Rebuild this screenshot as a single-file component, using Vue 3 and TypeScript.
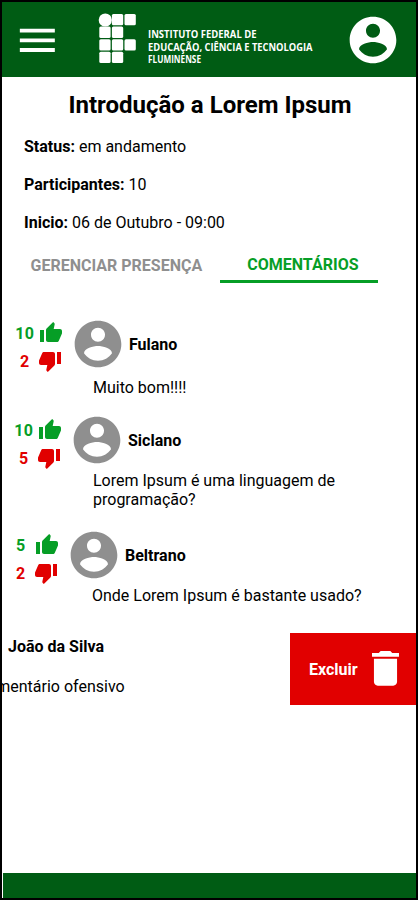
<script setup lang="ts">
interface Comment {
  id: string
  author: string
  text: string
  likes: number
  dislikes: number
}

const comments: Comment[] = [
  { id: 'fulano', author: 'Fulano', text: 'Muito bom!!!!', likes: 10, dislikes: 2 },
  { id: 'siclano', author: 'Siclano', text: 'Lorem Ipsum é uma linguagem de programação?', likes: 10, dislikes: 5 },
  { id: 'beltrano', author: 'Beltrano', text: 'Onde Lorem Ipsum é bastante usado?', likes: 5, dislikes: 2 },
]

const menuPath = 'M3 18h18v-2H3v2zm0-5h18v-2H3v2zm0-7v2h18V6H3z'
const deletePath = 'M6 19c0 1.1.9 2 2 2h8c1.1 0 2-.9 2-2V7H6v12zM19 4h-3.5l-1-1h-5l-1 1H5v2h14V4z'
const accountPath =
  'M12 2C6.48 2 2 6.48 2 12s4.48 10 10 10 10-4.48 10-10S17.52 2 12 2zm0 3c1.66 0 3 1.34 3 3s-1.34 3-3 3-3-1.34-3-3 1.34-3 3-3zm0 14.2c-2.5 0-4.71-1.28-6-3.22.03-1.99 4-3.08 6-3.08 1.99 0 5.97 1.09 6 3.08-1.29 1.94-3.5 3.22-6 3.22z'
const thumbUpPath =
  'M1 21h4V9H1v12zm22-11c0-1.1-.9-2-2-2h-6.31l.95-4.57.03-.32c0-.41-.17-.79-.44-1.06L14.17 1 7.59 7.59C7.22 7.95 7 8.45 7 9v10c0 1.1.9 2 2 2h9c.83 0 1.54-.5 1.84-1.22l3.02-7.05c.09-.23.14-.47.14-.73v-2z'
const thumbDownPath =
  'M15 3H6c-.83 0-1.54.5-1.84 1.22l-3.02 7.05c-.09.23-.14.47-.14.73v2c0 1.1.9 2 2 2h6.31l-.95 4.57-.03.32c0 .41.17.79.44 1.06L9.83 23l6.59-6.59c.36-.36.58-.86.58-1.41V5c0-1.1-.9-2-2-2zm4 0v12h4V3h-4z'

// Top-left corners of the square tiles in the institute's mark
const tiles: [number, number][] = [
  [14.9, 1], [27.5, 1],
  [2.3, 13.6], [14.9, 13.6],
  [2.3, 26.2], [14.9, 26.2], [27.5, 26.2],
  [2.3, 38.8], [14.9, 38.8],
]
</script>

<template>
  <div class="screen">
    <header class="topbar">
      <button class="menu" aria-label="Menu">
        <svg width="46.67" height="46.67" viewBox="0 0 24 24" fill="currentColor"><path :d="menuPath" /></svg>
      </button>
      <svg class="brand" width="218" height="54" viewBox="0 0 218 54">
        <g fill="#fff">
          <circle cx="8.3" cy="7" r="6.6" />
          <rect v-for="[x, y] in tiles" :key="`${x}-${y}`" :x="x" :y="y" width="11.3" height="11.3" rx="1.5" />
        </g>
        <g class="brand-text">
          <text x="51" y="25" textLength="108.5" lengthAdjust="spacingAndGlyphs">INSTITUTO FEDERAL DE</text>
          <text x="51" y="37.8" textLength="164.5" lengthAdjust="spacingAndGlyphs">EDUCAÇÃO, CIÊNCIA E TECNOLOGIA</text>
          <text x="51" y="50" textLength="53" lengthAdjust="spacingAndGlyphs">FLUMINENSE</text>
        </g>
      </svg>
      <button class="account" aria-label="Conta">
        <svg width="56" height="56" viewBox="0 0 24 24" fill="currentColor"><path :d="accountPath" /></svg>
      </button>
    </header>

    <main class="content">
      <h1>Introdução a Lorem Ipsum</h1>
      <section class="details">
        <p><b>Status:</b> em andamento</p>
        <p><b>Participantes:</b> 10</p>
        <p><b>Inicio:</b> 06 de Outubro - 09:00</p>
      </section>

      <nav class="tabs">
        <a class="tab">GERENCIAR PRESENÇA</a>
        <a class="tab active">COMENTÁRIOS</a>
      </nav>

      <section class="comments">
        <article v-for="c in comments" :key="c.id" class="comment" :class="c.id">
          <div class="head">
            <div class="votes">
              <div class="vote up">
                <span>{{ c.likes }}</span>
                <svg width="24" height="24" viewBox="0 0 24 24" fill="currentColor"><path :d="thumbUpPath" /></svg>
              </div>
              <div class="vote down">
                <span>{{ c.dislikes }}</span>
                <svg width="24" height="24" viewBox="0 0 24 24" fill="currentColor"><path :d="thumbDownPath" /></svg>
              </div>
            </div>
            <svg class="avatar" width="56" height="56" viewBox="0 0 24 24" fill="currentColor"><path :d="accountPath" /></svg>
            <strong>{{ c.author }}</strong>
          </div>
          <p class="text">{{ c.text }}</p>
        </article>
      </section>

      <article class="swiped">
        <div class="swiped-body">
          <strong>João da Silva</strong>
          <p>Comentário ofensivo</p>
        </div>
        <button class="delete">
          <span>Excluir</span>
          <svg width="27" height="34.7" viewBox="5 3 14 18" fill="currentColor"><path :d="deletePath" /></svg>
        </button>
      </article>
    </main>

    <footer class="bottombar"></footer>
  </div>
</template>

<style>
body {
  margin: 0;
  background: #fff;
}
</style>

<style scoped>
.screen {
  box-sizing: border-box;
  width: 418px;
  height: 900px;
  border: 2px solid #000;
  display: flex;
  flex-direction: column;
  overflow: hidden;
  background: #fff;
  color: #000;
  font: 400 16px/19px Roboto, sans-serif;
}
h1, p {
  margin: 0;
}
b, strong {
  font-weight: 700;
}
svg {
  display: block;
  flex: none;
}
button {
  border: 0;
  padding: 0;
  background: none;
  color: #fff;
  font: inherit;
}
.topbar {
  flex: none;
  display: flex;
  align-items: flex-start;
  height: 75px;
  background: #005c14;
}
.menu {
  width: 46.67px;
  margin: 14.6px 0 0 11.67px;
}
.brand {
  margin: 11px 0 0 36.66px;
}
.brand-text {
  fill: #fff;
  font: 700 10px "Open Sans", "Noto Sans", sans-serif;
}
.account {
  margin: 10px 0 0 30px;
}
.content {
  flex: 1;
}
h1 {
  margin-top: 14px;
  padding-left: 2px;
  text-align: center;
  font-size: 24px;
  line-height: 28px;
  font-weight: 700;
}
.details {
  display: flex;
  flex-direction: column;
  gap: 19px;
  padding: 18px 22px 0;
}
.tabs {
  display: flex;
  margin-top: 20px;
  padding-left: 11px;
  height: 31px;
}
.tab {
  box-sizing: border-box;
  width: 207px;
  padding: 4px 0 0 17.6px;
  color: #8f8f8f;
  font-weight: 700;
}
.tab.active {
  width: 158px;
  padding: 3px 0 0 27.3px;
  border-bottom: 3px solid #069e26;
  color: #069e26;
}
.comments {
  padding-top: 33px;
}
.comment {
  height: 96px;
  padding-left: 8px;
}
.siclano {
  height: 115px;
  padding-left: 7px;
}
.beltrano {
  height: 106px;
  padding-left: 4px;
}
.head {
  display: flex;
  align-items: center;
  height: 56px;
}
.votes {
  display: flex;
  flex-direction: column;
  gap: 4px;
  width: 60px;
  padding-top: 6px;
}
.siclano .votes,
.beltrano .votes {
  padding-top: 8px;
}
.vote {
  display: flex;
  align-items: center;
  font-weight: 700;
  letter-spacing: 0.3px;
}
.vote span {
  box-sizing: border-box;
  width: 29px;
  padding-left: 0.5px;
  text-align: center;
}
.up {
  color: #069e26;
}
.down {
  color: #e10000;
}
.down svg {
  margin-left: -1px;
}
.avatar {
  color: #8f8f8f;
}
.head strong {
  margin-left: 3px;
}
.text {
  width: 275px;
  padding: 3px 0 0 84px;
}
.fulano .text {
  padding: 6px 0 0 83px;
}
.beltrano .text {
  padding-left: 86px;
}
.swiped {
  display: flex;
  justify-content: space-between;
  height: 72px;
}
.swiped-body {
  padding: 4px 0 0 6px;
}
.swiped-body p {
  margin: 21px 0 0 -31.3px;
}
.delete {
  display: flex;
  align-items: center;
  box-sizing: border-box;
  width: 126px;
  padding-left: 19px;
  gap: 14px;
  background: #e10000;
  font-weight: 700;
}
.delete svg {
  margin-top: -1px;
}
.bottombar {
  flex: none;
  height: 25px;
  margin-left: 1px;
  background: #005c14;
}
</style>
